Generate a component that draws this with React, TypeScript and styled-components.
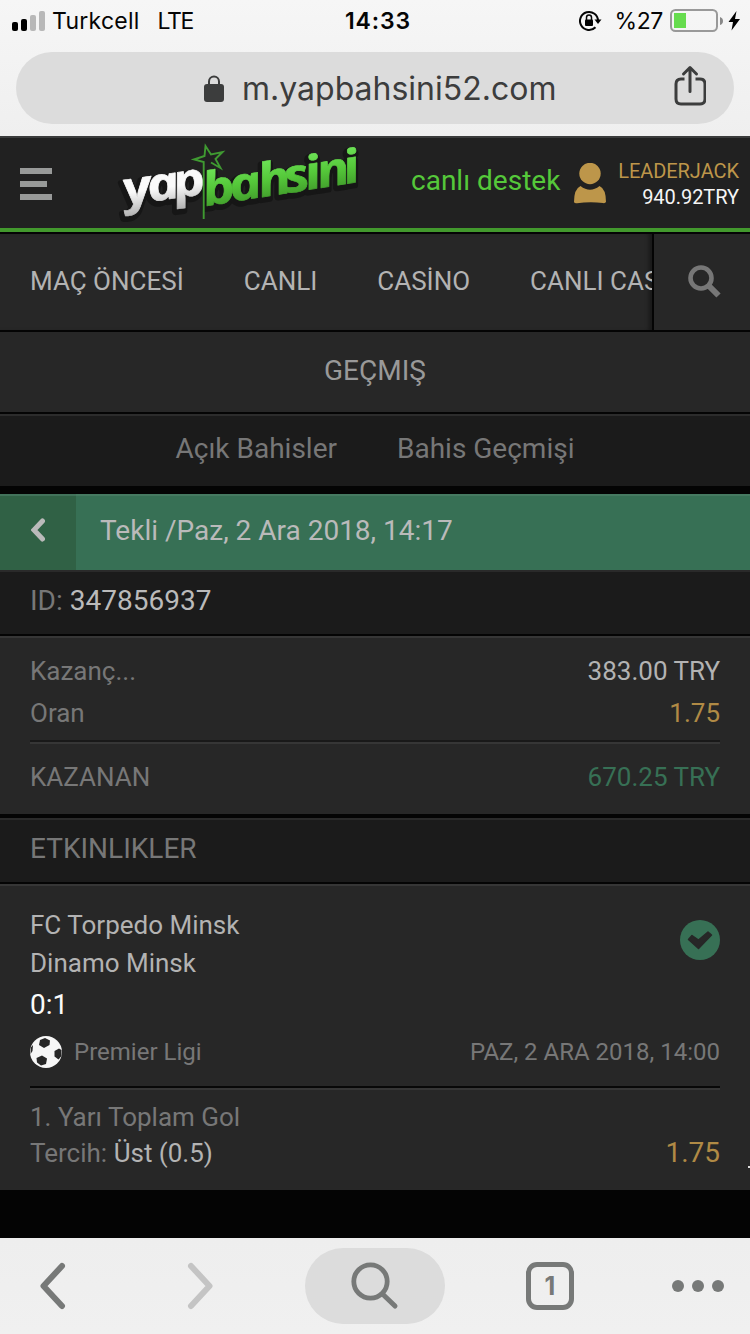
import React from 'react';
import styled, { createGlobalStyle } from 'styled-components';

const GlobalStyle = createGlobalStyle`
  * { box-sizing: border-box; }
  body { margin: 0; background: #040404; }
  svg { display: block; flex: none; }
`;

const ui = `Inter, "Liberation Sans", sans-serif`;

const Screen = styled.div`
  width: 750px;
  height: 1334px;
  display: flex;
  flex-direction: column;
  overflow: hidden;
  background: #040404;
  font-family: Roboto, "Liberation Sans", sans-serif;
  font-size: 26px;
  color: #b3b3b3;
  white-space: nowrap;
`;

const BrowserTop = styled.div`
  height: 136px;
  flex: none;
  background: linear-gradient(#f6f6f6, #efefef);
  font-family: ${ui};
`;

const StatusBar = styled.div`
  height: 52px;
  padding: 0 10px 11px 12px;
  display: grid;
  grid-template-columns: 1fr auto 1fr;
  align-items: center;
  color: #050505;
`;

const StatusSide = styled.div<{ $end?: boolean }>`
  display: flex;
  align-items: center;
  justify-content: ${(p) => (p.$end ? 'flex-end' : 'flex-start')};
`;

const StatusText = styled.span<{ $gap?: number; $spacing?: number }>`
  font-size: 23px;
  letter-spacing: ${(p) => p.$spacing ?? 0}px;
  margin-left: ${(p) => p.$gap ?? 0}px;
`;

const BatteryIcon = styled.svg`
  margin-left: 7px;
`;

const ChargeIcon = styled.svg`
  margin-left: 4px;
`;

const Clock = styled.span`
  font-size: 23px;
  font-weight: 600;
  letter-spacing: 0.9px;
  margin-left: 4px;
`;

const AddressBar = styled.div`
  margin: 0 16px;
  height: 72px;
  border-radius: 36px;
  background: #dcdcdc;
  display: flex;
  align-items: center;
  padding: 0 28px 0 187px;
  color: #3c3d3d;
`;

const Url = styled.span`
  font-size: 32px;
  margin-left: 17px;
  flex: 1;
`;

const ShareIcon = styled.svg`
  margin-bottom: 4px;
`;

const Header = styled.header`
  height: 98px;
  flex: none;
  border-top: 2px solid #3b3c3c;
  border-bottom: 2px solid #040404;
  box-shadow: inset 0 -4px 0 #42992d;
  background: #212121;
  display: flex;
  align-items: center;
  padding: 0 11px 4px 20px;
`;

const MenuIcon = styled.div`
  width: 32px;
  display: flex;
  flex-direction: column;
  gap: 7px;
  margin-top: 2px;
`;

const MenuBar = styled.span<{ $short?: boolean }>`
  height: 6px;
  width: ${(p) => (p.$short ? 27 : 32)}px;
  background: #989a99;
`;

const Logo = styled.svg`
  margin-left: 64px;
`;

const Support = styled.span`
  margin-left: 43px;
  width: 163px;
  font-size: 28px;
  color: #55c83a;
  padding-bottom: 5px;
`;

const Account = styled.div`
  flex: 1;
  display: flex;
  flex-direction: column;
  align-items: flex-end;
  font-size: 20px;
  letter-spacing: -0.05px;
  line-height: 26px;
  color: #f5f5f5;
  padding-top: 1px;
`;

const UserName = styled.span`
  color: #bd964a;
`;

const Nav = styled.nav`
  height: 98px;
  flex: none;
  display: flex;
  background: #272727;
  border-bottom: 2px solid #040404;
`;

const NavItems = styled.div`
  width: 652px;
  overflow: hidden;
  display: flex;
  align-items: center;
  gap: 60px;
  padding: 0 0 2px 30px;
  box-shadow: inset -5px 0 4px -2px #181818;
`;

const NavSearch = styled.div`
  flex: 1;
  border-left: 2px solid #040404;
  display: flex;
  align-items: center;
  justify-content: center;
  padding: 0 0 1px 4px;
`;

const PageTitle = styled.div`
  height: 82px;
  flex: none;
  background: #272727;
  border-bottom: 2px solid #040404;
  display: flex;
  align-items: center;
  justify-content: center;
  font-size: 28px;
  color: #999;
  padding-bottom: 3px;
`;

const Tabs = styled.div`
  height: 80px;
  flex: none;
  background: #1b1b1b;
  border-top: 2px solid #2c2c2c;
  border-bottom: 8px solid #040404;
  display: flex;
  align-items: center;
  justify-content: center;
  gap: 60px;
  font-size: 28px;
  color: #777;
  padding-bottom: 5px;
`;

const BetHeader = styled.div`
  height: 76px;
  flex: none;
  background: #377055;
  box-shadow: inset 0 2px 0 #467a61;
  display: flex;
  align-items: center;
  font-size: 28px;
  color: #bababa;
`;

const BackButton = styled.div`
  width: 76px;
  height: 76px;
  background: #306145;
  box-shadow: inset 0 2px 0 #42725a;
  display: flex;
  align-items: center;
  justify-content: center;
  padding-bottom: 4px;
`;

const BetTitle = styled.span`
  margin-left: 24px;
  padding-bottom: 3px;
`;

const SubHeader = styled.div`
  height: 66px;
  flex: none;
  background: #1b1b1b;
  border-top: 2px solid #2a2a2a;
  border-bottom: 2px solid #040404;
  padding: 0 30px 5px;
  display: flex;
  align-items: center;
  gap: 7px;
  font-size: 28px;
  color: #777;
`;

const Panel = styled.section<{ $top: number; $height: number }>`
  position: relative;
  height: ${(p) => p.$height}px;
  flex: none;
  background: #272727;
  border-top: 2px solid #363636;
  padding: ${(p) => p.$top}px 30px 0;
`;

const Row = styled.div<{ $height: number; $size?: number }>`
  height: ${(p) => p.$height}px;
  font-size: ${(p) => p.$size ?? 26}px;
  display: flex;
  align-items: center;
  justify-content: space-between;
  color: #777;
`;

const Value = styled.span<{ $color?: string }>`
  color: ${(p) => p.$color ?? '#b3b3b3'};
`;

const Divider = styled.div<{ $dark?: string }>`
  height: 4px;
  border-top: 2px solid ${(p) => p.$dark ?? '#191919'};
  border-bottom: 2px solid #363636;
`;

const Gap = styled.div<{ $height: number }>`
  height: ${(p) => p.$height}px;
  flex: none;
`;

const Match = styled.div`
  display: flex;
  justify-content: space-between;
  align-items: flex-start;
`;

const Team = styled.div`
  line-height: 38px;
`;

const Won = styled.svg`
  margin-top: 14px;
`;

const Score = styled.div`
  height: 44px;
  padding-top: 1px;
  font-size: 28px;
  line-height: 44px;
  color: #fafafa;
`;

const League = styled.span`
  display: flex;
  align-items: center;
  gap: 12px;
`;

const EdgeMark = styled.span`
  position: absolute;
  right: 0;
  bottom: 22px;
  width: 2px;
  height: 2px;
  background: #ddd;
`;

const Odds = styled.span`
  color: #b08a45;
  font-size: 28px;
  padding-bottom: 2px;
`;

const BrowserBottom = styled.footer`
  height: 96px;
  flex: none;
  margin-top: auto;
  background: linear-gradient(#eeeeee, #f0f0f0);
  display: grid;
  grid-template-columns: 105px 190px 160px 190px 105px;
  align-items: center;
  justify-items: center;
  color: #777978;
`;

const SearchPill = styled.div`
  width: 140px;
  height: 76px;
  border-radius: 38px;
  background: #dcdcdc;
  display: flex;
  align-items: center;
  justify-content: center;
`;

const TabCount = styled.div`
  width: 48px;
  height: 48px;
  border: 5px solid #777978;
  border-radius: 11px;
  display: flex;
  align-items: center;
  justify-content: center;
  font: 700 25px ${ui};
`;

const Dots = styled.div`
  display: flex;
  gap: 8px;
`;

const Dot = styled.span`
  width: 12px;
  height: 12px;
  border-radius: 50%;
  background: #777978;
`;

function YapLogo() {
  const word = {
    fontFamily: '"Open Sans", "Noto Sans", sans-serif',
    fontStyle: 'italic',
    fontWeight: 700,
    fontSize: 45,
    strokeLinejoin: 'round',
  } as const;
  const yap = '0 19.7 41.5';
  const bahsini = '0 22 46 67.5 85 95 117';
  return (
    <Logo width="252" height="88" viewBox="116 138 252 88">
      <defs>
        <linearGradient id="white" gradientUnits="userSpaceOnUse" x1="0" y1="-26" x2="0" y2="10">
          <stop offset="0.4" stopColor="#fafafa" />
          <stop offset="1" stopColor="#b5b5b5" />
        </linearGradient>
        <linearGradient id="green" gradientUnits="userSpaceOnUse" x1="0" y1="-34" x2="0" y2="2">
          <stop offset="0" stopColor="#6be054" />
          <stop offset="0.5" stopColor="#55c83a" />
          <stop offset="1" stopColor="#429f2c" />
        </linearGradient>
      </defs>
      <g {...word} fill="#161616" stroke="#161616" strokeWidth="6">
        <text transform="matrix(1.2 -0.17 0.25 1 125 207)" x={yap}>yap</text>
        <text transform="matrix(1.2 -0.19 0.25 1 205 208)" x={bahsini}>bahsini</text>
      </g>
      <g {...word} strokeWidth="0.600">
        <text fill="url(#white)" stroke="url(#white)" transform="matrix(1.2 -0.17 0.25 1 126.500 204)" x={yap}>yap</text>
        <text fill="url(#green)" stroke="url(#green)" transform="matrix(1.2 -0.19 0.25 1 206 205)" x={bahsini}>bahsini</text>
      </g>
      <path d="M203.700 218V161L194 158.500L204.500 155L205.500 145L211 153.500L222.500 151L215.500 158L220.500 167L211 161.500" fill="none" stroke="#3f9a31" strokeWidth="1.900" />
    </Logo>
  );
}

export default function App() {
  return (
    <>
      <GlobalStyle />
      <Screen>
        <BrowserTop>
          <StatusBar>
            <StatusSide>
              <svg width="34" height="20" viewBox="0 0 34 20">
                <rect x="0" y="11" width="6" height="9" rx="2" />
                <rect x="9" y="8" width="6" height="12" rx="2" />
                <rect x="18" y="4" width="6" height="16" rx="2" fill="#b8b8b8" />
                <rect x="27" y="0" width="6" height="20" rx="2" fill="#b8b8b8" />
              </svg>
              <StatusText $gap={6} $spacing={0.25}>Turkcell</StatusText>
              <StatusText $gap={18} $spacing={-1.4}>LTE</StatusText>
            </StatusSide>
            <Clock>14:33</Clock>
            <StatusSide $end>
              <svg width="23" height="22" viewBox="0 0 23 22">
                <path d="M19 11A9 9 0 1 0 16.500 17.200" fill="none" stroke="#050505" strokeWidth="2" />
                <path d="M15.500 9.500H22.500L19 14Z" />
                <rect x="6" y="9.500" width="8" height="6.500" rx="1" />
                <path d="M7.500 10V7.500a2.500 2.500 0 0 1 5 0V10" fill="none" stroke="#050505" strokeWidth="1.500" />
              </svg>
              <StatusText $gap={13} $spacing={-0.4}>%27</StatusText>
              <BatteryIcon width="54" height="24" viewBox="0 0 54 24">
                <rect x="1" y="1" width="46" height="21" rx="4.500" fill="none" stroke="#999" strokeWidth="2" />
                <rect x="4" y="4" width="12" height="15" fill="#66dc4e" />
                <path d="M50 8q3 1 3 4t-3 4z" fill="#888" />
              </BatteryIcon>
              <ChargeIcon width="12" height="20" viewBox="0 0 12 20">
                <path d="M8.500 0L0.500 11H5L3.500 19.500L12 8H7Z" />
              </ChargeIcon>
            </StatusSide>
          </StatusBar>
          <AddressBar>
            <svg width="22" height="27" viewBox="0 0 22 27">
              <rect x="1" y="9" width="20" height="18" rx="3" fill="#3c3d3d" />
              <path d="M6 10V6.500a5 5 0 0 1 10 0V10" fill="none" stroke="#3c3d3d" strokeWidth="2" />
            </svg>
            <Url>m.yapbahsini52.com</Url>
            <ShareIcon width="32" height="42" viewBox="0 0 32 42" fill="none" stroke="#3c3d3d" strokeWidth="3">
              <path d="M10.500 14H7Q2 14 2 19V34Q2 39 7 39H26Q31 39 31 34V19Q31 14 26 14H21.500" />
              <path d="M16 26.500V3M9.500 9L16 2.500L22.500 9" strokeLinecap="round" strokeLinejoin="round" />
            </ShareIcon>
          </AddressBar>
        </BrowserTop>

        <Header>
          <MenuIcon>
            <MenuBar />
            <MenuBar $short />
            <MenuBar />
          </MenuIcon>
          <YapLogo />
          <Support>canlı destek</Support>
          <svg width="32" height="41" viewBox="0 0 32 41" fill="#bd964a">
            <circle cx="16" cy="10.500" r="10.700" />
            <path d="M6.500 23Q16 30.500 25.500 23Q32 26 32 39Q31 40.500 29 40Q16 38.500 3 40.200Q0.500 40.500 0 39Q0 26 6.500 23Z" />
          </svg>
          <Account>
            <UserName>LEADERJACK</UserName>
            <span>940.92TRY</span>
          </Account>
        </Header>

        <Nav>
          <NavItems>
            <span>MAÇ ÖNCESİ</span>
            <span>CANLI</span>
            <span>CASİNO</span>
            <span>CANLI CASİNO</span>
          </NavItems>
          <NavSearch>
            <svg width="33" height="33" viewBox="0 0 33 33" fill="none" stroke="#777">
              <circle cx="13" cy="13" r="10.500" strokeWidth="4.600" />
              <path d="M20 20L30.500 30.500" strokeWidth="6" />
            </svg>
          </NavSearch>
        </Nav>

        <PageTitle>GEÇMIŞ</PageTitle>

        <Tabs>
          <span>Açık Bahisler</span>
          <span>Bahis Geçmişi</span>
        </Tabs>

        <BetHeader>
          <BackButton>
            <svg width="14" height="24" viewBox="0 0 14 24">
              <path d="M11.500 3L3 12L11.500 21" fill="none" stroke="#bababa" strokeWidth="5" strokeLinecap="round" />
            </svg>
          </BackButton>
          <BetTitle>Tekli /Paz, 2 Ara 2018, 14:17</BetTitle>
        </BetHeader>

        <SubHeader>
          <span>ID:</span>
          <Value $color="#bababa">347856937</Value>
        </SubHeader>

        <Panel $top={12} $height={178}>
          <Row $height={42}>
            <span>Kazanç...</span>
            <Value>383.00 TRY</Value>
          </Row>
          <Row $height={42}>
            <span>Oran</span>
            <Value $color="#b08a45">1.75</Value>
          </Row>
          <Gap $height={6} />
          <Divider />
          <Row $height={66}>
            <span>KAZANAN</span>
            <Value $color="#377055">670.25 TRY</Value>
          </Row>
        </Panel>
        <Gap $height={4} />

        <SubHeader>
          <span>ETKINLIKLER</span>
        </SubHeader>

        <Panel $top={20} $height={306}>
          <Match>
            <div>
              <Team>FC Torpedo Minsk</Team>
              <Team>Dinamo Minsk</Team>
            </div>
            <Won width="40" height="40" viewBox="0 0 40 40">
              <circle cx="20" cy="20" r="20" fill="#377055" />
              <path d="M8.500 19.500L12 15.500L18.500 20L28 12L31.500 15L18.500 28.500Z" fill="#272727" stroke="#272727" strokeWidth="1.500" strokeLinejoin="round" />
            </Won>
          </Match>
          <Score>0:1</Score>
          <Row $height={52} $size={24}>
            <League>
              <svg width="32" height="32" viewBox="0 0 32 32">
                <circle cx="16" cy="16" r="16" fill="#f7f7f7" />
                <g fill="#272727">
                  <path d="M10 4L15 2L20 4.500L19.500 9L14 12L9 9Z" />
                  <path d="M24.500 15L29 12.500L31.500 14V20L28.500 23.500L24.500 20.500Z" />
                  <path d="M6.500 22L12 19.500L17 22.500L16 28L11 29.500L7 26.500Z" />
                  <path d="M0.800 11.500L3 9L2.500 15L0.500 18Z" />
                </g>
              </svg>
              Premier Ligi
            </League>
            <span>PAZ, 2 ARA 2018, 14:00</span>
          </Row>
          <Gap $height={8} />
          <Divider $dark="#080808" />
          <Gap $height={9} />
          <Row $height={36}>
            <span>1. Yarı Toplam Gol</span>
          </Row>
          <Row $height={36}>
            <span>
              Tercih: <Value>Üst (0.5)</Value>
            </span>
            <Odds>1.75</Odds>
          </Row>
          <EdgeMark />
        </Panel>

        <BrowserBottom>
          <svg width="26" height="48" viewBox="0 0 26 48">
            <path d="M22 4L3.500 24L22 44" fill="none" stroke="#777978" strokeWidth="6" strokeLinecap="round" strokeLinejoin="round" />
          </svg>
          <svg width="26" height="48" viewBox="0 0 26 48">
            <path d="M4 4L22.500 24L4 44" fill="none" stroke="#c4c4c4" strokeWidth="6" strokeLinecap="round" strokeLinejoin="round" />
          </svg>
          <SearchPill>
            <svg width="48" height="48" viewBox="0 0 48 48" fill="none" stroke="#777978">
              <circle cx="19.500" cy="19.500" r="16.700" strokeWidth="4.800" />
              <path d="M31.500 32L44 44" strokeWidth="5" strokeLinecap="round" />
            </svg>
          </SearchPill>
          <TabCount>1</TabCount>
          <Dots>
            <Dot />
            <Dot />
            <Dot />
          </Dots>
        </BrowserBottom>
      </Screen>
    </>
  );
}
